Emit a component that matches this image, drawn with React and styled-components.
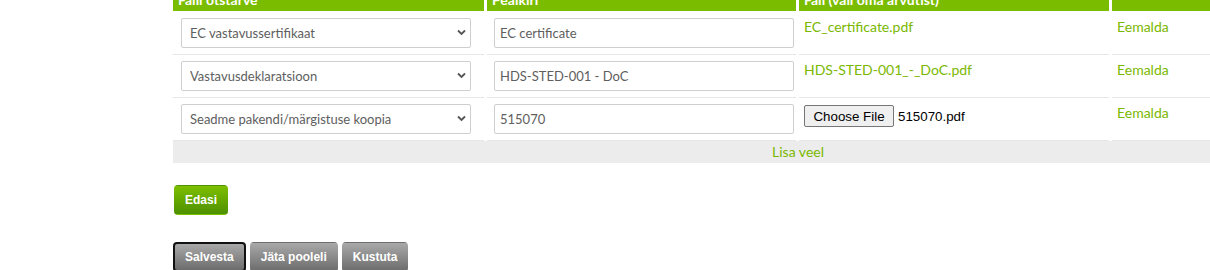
import React from 'react';
import styled, { createGlobalStyle } from 'styled-components';

const GlobalStyle = createGlobalStyle`
  html, body {
    margin: 0;
    padding: 0;
    background: #fff;
    overflow: hidden;
  }
  body {
    font-family: Lato, "Liberation Sans", sans-serif;
  }
`;

const Page = styled.div`
  margin-top: -12px;
  padding-left: 170px;
  width: 1260px;
`;

const Table = styled.table`
  border-collapse: separate;
  border-spacing: 3px 0;
  table-layout: fixed;
  width: 1256px;
`;

const Th = styled.th`
  background: #7abd00;
  color: #fff;
  font-weight: bold;
  font-size: 14px;
  line-height: 16px;
  text-align: left;
  padding: 4px 5px 3px;
  border-bottom: 1px solid #fff;
`;

const Td = styled.td`
  vertical-align: top;
  padding: ${(p) => (p.$text ? '4px 5px 6px' : '6px 7px 6px')};
  border-bottom: 1px solid #e6e6e6;
`;

const SelectWrap = styled.div`
  position: relative;
  width: 290px;
  margin-left: 1px;
`;

const Select = styled.select`
  appearance: none;
  -webkit-appearance: none;
  display: block;
  width: 290px;
  height: 30px;
  box-sizing: border-box;
  border: 1px solid #cfcfcf;
  border-radius: 2px;
  background: #fff;
  color: #5e5e5e;
  font-family: Lato, "Liberation Sans", sans-serif;
  font-size: 13px;
  padding: 0 24px 0 8px;
  outline: none;
`;

const Chevron = styled.svg`
  position: absolute;
  right: 5px;
  top: 11px;
  pointer-events: none;
`;

const Input = styled.input`
  display: block;
  width: 300px;
  height: 30px;
  box-sizing: border-box;
  border: 1px solid #cfcfcf;
  border-radius: 2px;
  color: #5e5e5e;
  font-family: Lato, "Liberation Sans", sans-serif;
  font-size: 13px;
  padding: 0 5px;
  outline: none;
`;

const FileLink = styled.a`
  color: #7ab800;
  font-size: 14px;
  line-height: 17px;
  text-decoration: none;
  cursor: pointer;
`;

const FilePick = styled.div`
  display: flex;
  align-items: center;
  gap: 4px;
  margin-top: 3px;
  font-family: "Liberation Sans", Arial, sans-serif;
  font-size: 13.33px;
  color: #000;
`;

const FileButton = styled.button`
  height: 22px;
  width: 90px;
  padding: 0 6px;
  border: 1px solid #767676;
  border-radius: 2px;
  background: #efefef;
  font-family: "Liberation Sans", Arial, sans-serif;
  font-size: 13.33px;
  color: #000;
`;

const AddRow = styled.td`
  background: #ececec;
  text-align: center;
  padding: 2px 0 3px;
  line-height: 16px;
`;

const AddLink = styled.a`
  color: #7ab800;
  font-size: 14px;
  cursor: pointer;
`;

const Actions = styled.div`
  display: flex;
  gap: 4px;
  margin-top: ${(p) => p.$top}px;
  padding-left: ${(p) => p.$left}px;
`;

const Button = styled.button`
  height: 30px;
  box-sizing: border-box;
  padding: 0 ${(p) => (p.$green ? 10 : 10)}px;
  border-radius: 4px;
  border: ${(p) => (p.$focused ? '2px solid #111' : '1px solid transparent')};
  background: ${(p) =>
    p.$green
      ? 'linear-gradient(#7dbf00, #4e9000)'
      : 'linear-gradient(#a9a9a9, #6c6c6c)'};
  color: #fff;
  font-family: "Liberation Sans", Arial, sans-serif;
  font-weight: bold;
  font-size: 12px;
  cursor: pointer;
`;

const rows = [
  { type: 'EC vastavussertifikaat', title: 'EC certificate', file: 'EC_certificate.pdf' },
  { type: 'Vastavusdeklaratsioon', title: 'HDS-STED-001 - DoC', file: 'HDS-STED-001_-_DoC.pdf' },
  { type: 'Seadme pakendi/märgistuse koopia', title: '515070', picked: '515070.pdf' },
];

const types = ['EC vastavussertifikaat', 'Vastavusdeklaratsioon', 'Seadme pakendi/märgistuse koopia'];

const App = () => (
  <Page>
    <GlobalStyle />
    <Table>
      <colgroup>
        <col style={{ width: 311 }} />
        <col style={{ width: 309 }} />
        <col style={{ width: 310 }} />
        <col style={{ width: 311 }} />
      </colgroup>
      <thead>
        <tr>
          <Th>Faili otstarve</Th>
          <Th>Pealkiri</Th>
          <Th>Fail (vali oma arvutist)</Th>
          <Th />
        </tr>
      </thead>
      <tbody>
        {rows.map((r) => (
          <tr key={r.title}>
            <Td>
              <SelectWrap>
                <Select defaultValue={r.type}>
                  {types.map((t) => (
                    <option key={t}>{t}</option>
                  ))}
                </Select>
                <Chevron width="9" height="7" viewBox="0 0 9 7">
                  <path d="M1 1.5 L4.5 5 L8 1.5" fill="none" stroke="#555" strokeWidth="1.8" />
                </Chevron>
              </SelectWrap>
            </Td>
            <Td>
              <Input defaultValue={r.title} />
            </Td>
            <Td $text>
              {r.file ? (
                <FileLink>{r.file}</FileLink>
              ) : (
                <FilePick>
                  <FileButton type="button">Choose File</FileButton>
                  <span>{r.picked}</span>
                </FilePick>
              )}
            </Td>
            <Td $text>
              <FileLink>Eemalda</FileLink>
            </Td>
          </tr>
        ))}
        <tr>
          <AddRow colSpan={4}>
            <AddLink>Lisa veel</AddLink>
          </AddRow>
        </tr>
      </tbody>
    </Table>
    <Actions $top={22} $left={4}>
      <Button $green>Edasi</Button>
    </Actions>
    <Actions $top={27} $left={3}>
      <Button $focused>Salvesta</Button>
      <Button>Jäta pooleli</Button>
      <Button>Kustuta</Button>
    </Actions>
  </Page>
);

export default App;
